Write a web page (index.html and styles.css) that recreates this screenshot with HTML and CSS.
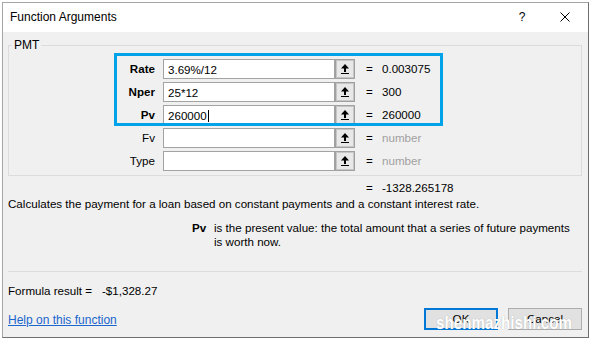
FILE: index.html
```html
<!DOCTYPE html>
<html>
<head>
<meta charset="utf-8">
<link rel="stylesheet" href="styles.css">
</head>
<body>
<div class="dialog">
  <div class="titlebar">
    <span class="title">Function Arguments</span>
    <span class="tb-help">?</span>
    <span class="tb-close"><svg width="10" height="10" viewBox="0 0 10 10"><path d="M0.5 0.5L9.5 9.5M9.5 0.5L0.5 9.5" stroke="#000" stroke-width="1" fill="none"/></svg></span>
  </div>
  <div class="content">
    <fieldset class="group">
      <legend class="group-title">PMT</legend>
      <div class="arg-row">
        <span class="arg-label req">Rate</span>
        <div class="arg-input">3.69%/12</div>
        <span class="collapse"><svg width="8" height="10" viewBox="0 0 8 10"><path d="M4 0L8 4.5H0Z" fill="#000"/><rect x="3" y="4" width="2" height="4" fill="#000"/><rect x="0" y="9" width="8" height="1" fill="#000"/></svg></span>
        <span class="eq">=</span>
        <span class="arg-value">0.003075</span>
      </div>
      <div class="arg-row">
        <span class="arg-label req">Nper</span>
        <div class="arg-input">25*12</div>
        <span class="collapse"><svg width="8" height="10" viewBox="0 0 8 10"><path d="M4 0L8 4.5H0Z" fill="#000"/><rect x="3" y="4" width="2" height="4" fill="#000"/><rect x="0" y="9" width="8" height="1" fill="#000"/></svg></span>
        <span class="eq">=</span>
        <span class="arg-value">300</span>
      </div>
      <div class="arg-row">
        <span class="arg-label req">Pv</span>
        <div class="arg-input">260000<span class="caret"></span></div>
        <span class="collapse"><svg width="8" height="10" viewBox="0 0 8 10"><path d="M4 0L8 4.5H0Z" fill="#000"/><rect x="3" y="4" width="2" height="4" fill="#000"/><rect x="0" y="9" width="8" height="1" fill="#000"/></svg></span>
        <span class="eq">=</span>
        <span class="arg-value">260000</span>
      </div>
      <div class="arg-row">
        <span class="arg-label">Fv</span>
        <div class="arg-input"></div>
        <span class="collapse"><svg width="8" height="10" viewBox="0 0 8 10"><path d="M4 0L8 4.5H0Z" fill="#000"/><rect x="3" y="4" width="2" height="4" fill="#000"/><rect x="0" y="9" width="8" height="1" fill="#000"/></svg></span>
        <span class="eq">=</span>
        <span class="arg-value muted">number</span>
      </div>
      <div class="arg-row">
        <span class="arg-label">Type</span>
        <div class="arg-input"></div>
        <span class="collapse"><svg width="8" height="10" viewBox="0 0 8 10"><path d="M4 0L8 4.5H0Z" fill="#000"/><rect x="3" y="4" width="2" height="4" fill="#000"/><rect x="0" y="9" width="8" height="1" fill="#000"/></svg></span>
        <span class="eq">=</span>
        <span class="arg-value muted">number</span>
      </div>
    </fieldset>
    <div class="result-row"><span class="eq">=</span><span class="arg-value">-1328.265178</span></div>
    <p class="desc">Calculates the payment for a loan based on constant payments and a constant interest rate.</p>
    <div class="argdesc">
      <span class="argdesc-name">Pv</span>
      <span class="argdesc-text"><span class="line">is the present value: the total amount that a series of future payments</span><span class="line">is worth now.</span></span>
    </div>
    <div class="sep"></div>
    <div class="formula"><span class="formula-label">Formula result =</span><span>-$1,328.27</span></div>
    <div class="footer">
      <a class="help" href="#">Help on this function</a>
      <div class="buttons">
        <span class="btn primary">OK</span>
        <span class="btn">Cancel</span>
      </div>
    </div>
  </div>
  <div class="annot"></div>
</div>
<div class="watermark">shenmazhishi.com</div>
</body>
</html>
```

FILE: styles.css
```css
html, body {
  margin: 0;
  padding: 0;
}
body {
  width: 590px;
  height: 340px;
  overflow: hidden;
  background: #ffffff;
  font-family: "Liberation Sans", Arial, sans-serif;
  font-size: 12px;
  line-height: 14px;
  color: #000;
  position: relative;
}
.dialog {
  position: relative;
  margin: 2px 0 0 2px;
  width: 585px;
  border: 1px solid #a6a6a6;
  border-right-color: #6f6f6f;
  border-bottom-color: #6f6f6f;
  background: #f0f0f0;
}
.titlebar {
  display: flex;
  align-items: center;
  height: 29px;
  background: #ffffff;
}
.title {
  padding-left: 7px;
  flex: 1;
  margin-top: -2px;
}
.tb-help {
  width: 40px;
  text-align: center;
  margin-top: -2px;
}
.tb-close {
  width: 46px;
  display: flex;
  justify-content: center;
  margin-top: -2px;
}
.tb-close svg { display: block; }
.content {
  padding: 6px 6px 7px 5px;
  font-size: 11.6px;
}
.group {
  margin: 0;
  padding: 7px 0 4px 0;
  border: 1px solid #dcdcdc;
  min-width: 0;
  display: flex;
  flex-direction: column;
  gap: 3px;
}
.group-title {
  margin-left: 3px;
  padding: 0 2px;
  line-height: 14px;
  font-size: 12px;
}
.arg-row {
  display: flex;
  align-items: center;
  height: 20px;
}
.arg-label {
  width: 146px;
  text-align: right;
  margin-right: 8px;
}
.req { font-weight: bold; }
.arg-input {
  box-sizing: border-box;
  width: 172px;
  height: 20px;
  border: 1px solid #a3a3a3;
  background: #fff;
  padding: 2px 0 0 4px;
  line-height: 14px;
  display: flex;
  align-items: center;
  white-space: nowrap;
}
.caret {
  display: inline-block;
  width: 1px;
  height: 12px;
  background: #000;
  margin-left: 1px;
}
.collapse {
  box-sizing: border-box;
  width: 20px;
  height: 20px;
  border: 1px solid #a0a0a0;
  box-shadow: inset 0 0 0 1px #c6c6c6;
  background: #e8e8e8;
  display: flex;
  align-items: center;
  justify-content: center;
}
.collapse svg { display: block; }
.eq {
  margin-left: 11px;
  width: 16px;
}
.muted { color: #a0a0a0; }
.result-row {
  display: flex;
  margin-top: 5px;
  padding-left: 347px;
  height: 14px;
}
.desc {
  margin: 2px 0 0 0;
  white-space: nowrap;
}
.argdesc {
  display: flex;
  margin-top: 10px;
  padding-left: 184px;
}
.argdesc-name {
  width: 22px;
  font-weight: bold;
}
.argdesc-text .line {
  display: block;
  white-space: nowrap;
}
.sep {
  margin-top: 22px;
  height: 1px;
  background: #dcdcdc;
}
.formula {
  display: flex;
  margin-top: 12px;
}
.formula-label {
  width: 94px;
}
.footer {
  display: flex;
  align-items: center;
  justify-content: space-between;
  margin-top: 10px;
  height: 22px;
}
.help {
  color: #1a66cc;
  text-decoration: underline;
  margin-top: 2px;
  font-size: 12px;
}
.buttons {
  display: flex;
  gap: 10px;
}
.btn {
  box-sizing: border-box;
  width: 74px;
  height: 22px;
  border: 1px solid #adadad;
  background: #e1e1e1;
  display: flex;
  align-items: center;
  justify-content: center;
}
.btn.primary {
  border: 2px solid #0078d7;
}
.annot {
  position: absolute;
  left: 111px;
  top: 50px;
  width: 329px;
  height: 73px;
  box-sizing: border-box;
  border: 3px solid #00a2e8;
}
.watermark {
  position: absolute;
  left: 436px;
  top: 312px;
  font-family: "Liberation Sans", Arial, sans-serif;
  font-weight: bold;
  font-size: 19px;
  line-height: 22px;
  color: #ffffff;
  transform: scaleX(0.8);
  transform-origin: left top;
  text-shadow: 0 0 1px rgba(120,120,120,0.6);
}
```
